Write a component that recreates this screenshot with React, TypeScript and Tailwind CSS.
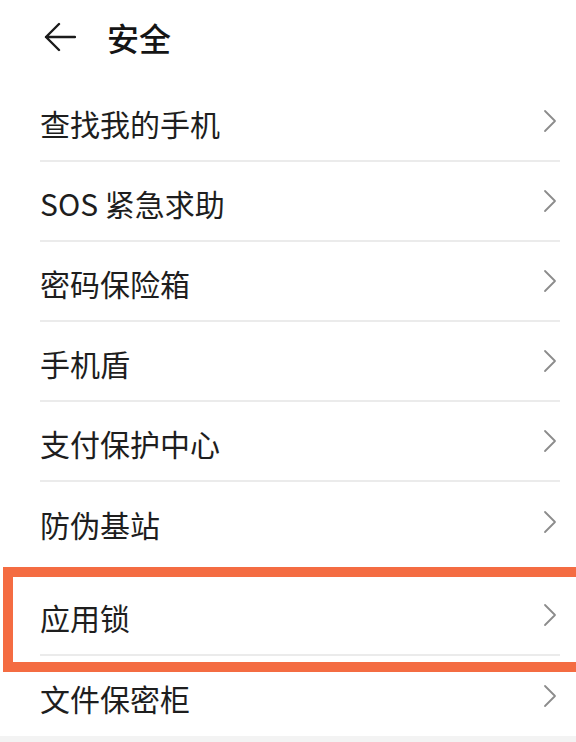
const items = ["查找我的手机", "SOS 紧急求助", "密码保险箱", "手机盾", "支付保护中心", "防伪基站"];

function Chevron() {
  return (
    <svg width="14" height="24" viewBox="0 0 14 24" fill="none" className="shrink-0">
      <path d="M2 2l10 10L2 22" stroke="#8c8c8c" strokeWidth="1.8" strokeLinecap="round" strokeLinejoin="round" />
    </svg>
  );
}

function Row({ label, divider = true }: { label: string; divider?: boolean }) {
  return (
    <div className={`h-[80px] flex items-center justify-between pr-[3px] ${divider ? "border-b-2 border-[#ebebeb]" : ""}`}>
      <span className="text-[30px] text-[#1e1e1e] leading-none pt-[4px]">{label}</span>
      <Chevron />
    </div>
  );
}

export default function App() {
  const font = { fontFamily: '"Noto Sans CJK SC", "Noto Sans", sans-serif' };
  return (
    <div className="w-[576px] h-[742px] bg-white overflow-hidden flex flex-col" style={font}>
      <header className="h-[82px] flex items-center pl-[44px] gap-[31px] pb-[8px]">
        <svg width="32" height="30" viewBox="0 0 32 30" fill="none">
          <path d="M15 2L2 15l13 13M2 15h29" stroke="#1b1b1b" strokeWidth="2.4" strokeLinecap="round" strokeLinejoin="round" />
        </svg>
        <h1 className="text-[32px] font-medium text-[#151515] leading-none">安全</h1>
      </header>

      <div className="flex flex-col pl-[40px] pr-[16px]">
        {items.map((label, i) => (
          <Row key={label} label={label} divider={i < items.length - 1} />
        ))}
      </div>

      <div className="relative pt-[14px] pl-[40px] pr-[16px]">
        <Row label="应用锁" />
        <div className="absolute top-[5px] left-[3px] -right-[10px] -bottom-[16px] border-[10px] border-[#f46c42] pointer-events-none" />
      </div>

      <div className="pl-[40px] pr-[16px]">
        <Row label="文件保密柜" divider={false} />
      </div>

      <div className="flex-1 bg-[#f3f3f3]" />
    </div>
  );
}
